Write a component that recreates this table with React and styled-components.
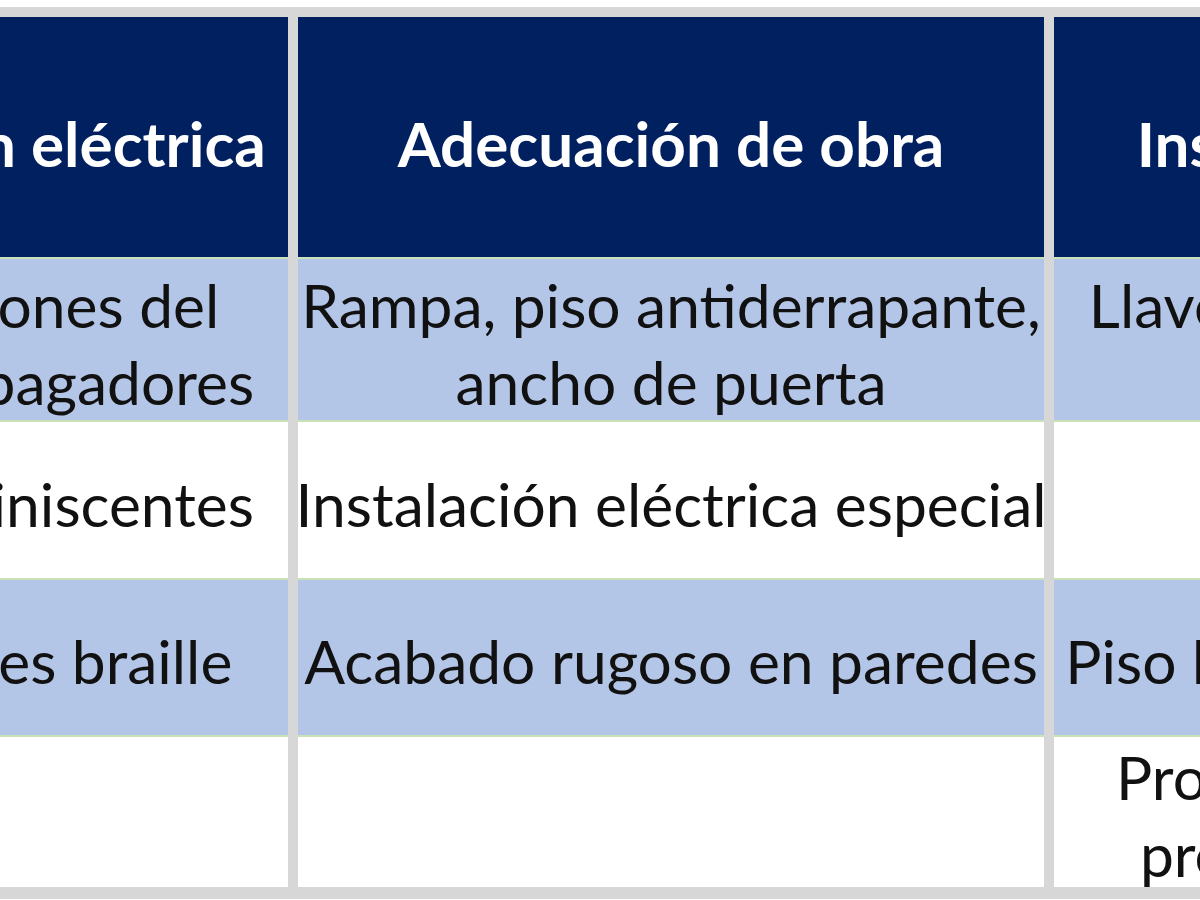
import React from "react";
import styled, { createGlobalStyle } from "styled-components";

const Global = createGlobalStyle`
  html, body { margin: 0; padding: 0; background: #ffffff; }
  body { font-family: Lato, "Open Sans", sans-serif; overflow: hidden; }
`;

const Page = styled.div`
  width: 1200px;
  height: 900px;
  overflow: hidden;
  padding-top: 7px;
  box-sizing: border-box;
`;

const Table = styled.div`
  display: grid;
  grid-template-columns: 592px 746px 800px;
  grid-template-rows: 240px 163px 158px 157px 152px;
  column-gap: 10px;
  margin-left: -304px;
  width: max-content;
  background: #d7d7d7;
  padding: 10px 0 12px;
`;

const tones = {
  head: { bg: "#002060", fg: "#ffffff" },
  blue: { bg: "#b4c6e7", fg: "#111111" },
  white: { bg: "#ffffff", fg: "#111111" },
};

const Cell = styled.div`
  background: ${(p) => tones[p.$tone].bg};
  color: ${(p) => tones[p.$tone].fg};
  border-top: ${(p) => (p.$tone === "head" ? "0" : "2px solid #c9e2b8")};
  display: flex;
  flex-direction: column;
  align-items: center;
  justify-content: center;
  text-align: center;
  white-space: nowrap;
  font-size: ${(p) => (p.$tone === "head" ? "62px" : "60.5px")};
  font-weight: ${(p) => (p.$tone === "head" ? 700 : 400)};
  line-height: 77px;
  padding-top: ${(p) => (p.$tone === "head" ? "12px" : "6px")};
  box-sizing: border-box;
`;

const rows = [
  {
    tone: "head",
    cells: [["Instalación eléctrica"], ["Adecuación de obra"], ["Instalaciones sanitarias"]],
  },
  {
    tone: "blue",
    cells: [
      ["Adaptaciones del", "nivel de apagadores"],
      ["Rampa, piso antiderrapante,", "ancho de puerta"],
      ["Llaves de palanca en lavabo", "y regadera"],
    ],
  },
  {
    tone: "white",
    cells: [["Guías luminiscentes"], ["Instalación eléctrica especial"], ["Barras de apoyo"]],
  },
  {
    tone: "blue",
    cells: [["Indicadores braille"], ["Acabado rugoso en paredes"], ["Piso bajo en área de regadera"]],
  },
  {
    tone: "white",
    cells: [[""], [""], ["Protección de tuberías de", "presión bajo los lavabos"]],
  },
];

export default function App() {
  return (
    <Page>
      <Global />
      <Table>
        {rows.map((r, i) =>
          r.cells.map((lines, j) => (
            <Cell key={`${i}-${j}`} $tone={r.tone}>
              {lines.map((l, k) => (
                <span key={k}>{l}</span>
              ))}
            </Cell>
          ))
        )}
      </Table>
    </Page>
  );
}
